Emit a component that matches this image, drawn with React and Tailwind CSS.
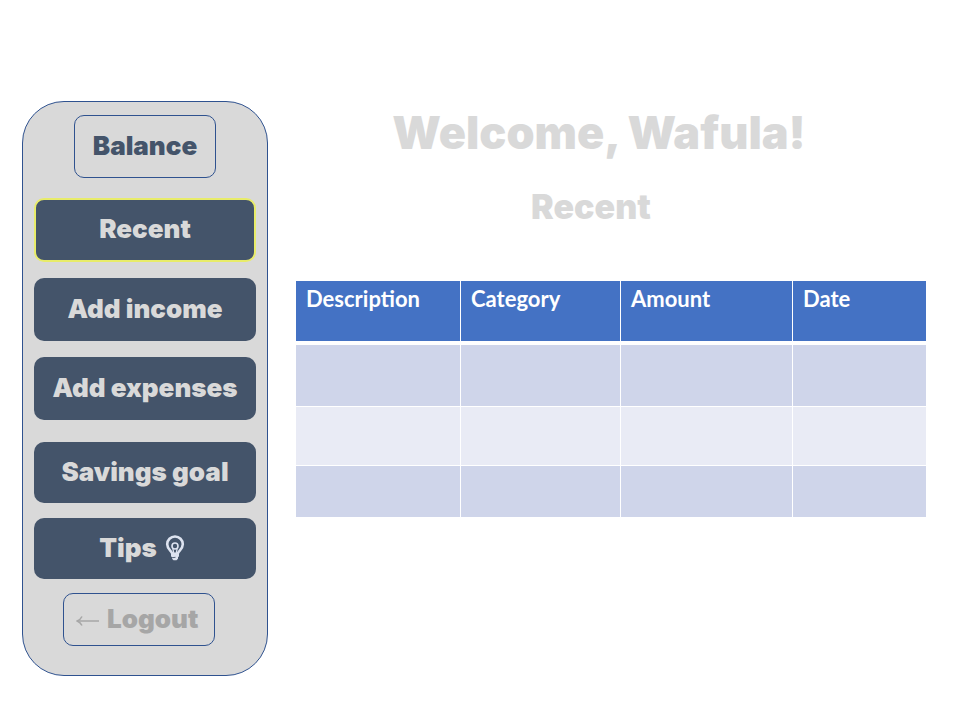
import clsx from "clsx";

const columns = [
  { label: "Description", width: "w-[165px]" },
  { label: "Category", width: "w-[160px]" },
  { label: "Amount", width: "w-[172px]" },
  { label: "Date", width: "w-[133px]" },
];

const rows = [
  { id: 1, style: "h-[62px] bg-[#cfd5ea]" },
  { id: 2, style: "h-[59px] bg-[#e9ebf5]" },
  { id: 3, style: "h-[52px] bg-[#cfd5ea]" },
];

function BulbIcon() {
  return (
    <svg viewBox="0 0 20 26" className="h-[26px] w-5 shrink-0 text-[#dde3f0]" fill="none" aria-hidden="true">
      <path
        d="M7 18.500C7 16 2.200 14.400 2.200 9.300a7.800 7.800 0 0 1 15.600 0c0 5.100-4.800 6.700-4.800 9.200"
        stroke="currentColor"
        strokeWidth="2.600"
      />
      <path
        d="M8.800 18 7.800 13.500M11.200 18l1-4.500"
        stroke="currentColor"
        strokeWidth="1.200"
      />
      <circle cx="10" cy="11" r="3" stroke="currentColor" strokeWidth="1.600" />
      <path d="M6 17.500h8v3.700l-1 1v1.600L11.500 25.300h-3L7 23.800v-1.600l-1-1z" fill="currentColor" />
      <path d="M6.500 22.800l4-.5" stroke="#44546a" strokeWidth="0.900" />
    </svg>
  );
}

function ArrowIcon() {
  return (
    <svg viewBox="0 0 23 12" className="mt-1 h-3 w-[23px] shrink-0" fill="none" aria-hidden="true">
      <path d="M1.500 6H23" stroke="currentColor" strokeWidth="1.500" />
      <path d="M6 1.500C5 3.500 3.500 5 1.200 6 3.500 7 5 8.500 6 10.500" stroke="currentColor" strokeWidth="1.500" />
    </svg>
  );
}

function MenuButton({ active, className, children }) {
  return (
    <button
      type="button"
      className={clsx(
        "flex w-full items-center justify-center gap-2 rounded-[10px] bg-[#44546a] pb-0.5 text-[#d9d9d9]",
        active && "border-2 border-[#e8ec6a]",
        className
      )}
    >
      {children}
    </button>
  );
}

function OutlineButton({ className, children }) {
  return (
    <button
      type="button"
      className={clsx(
        "flex items-center rounded-[10px] border border-[#2f528f] pb-0.5",
        className
      )}
    >
      {children}
    </button>
  );
}

export default function App() {
  return (
    <div className="flex min-h-screen items-start gap-7 bg-white pt-[101px] pr-[34px] pb-11 pl-[22px] font-['Arial_Black',Inter,sans-serif]">
      <nav
        aria-label="Main"
        className="flex w-[246px] shrink-0 flex-col items-center rounded-[42px] border border-[#2f528f] bg-[#d9d9d9] px-[11px] pt-[13px] pb-[29px] text-[26px] leading-8 font-black"
      >
        <OutlineButton className="h-[63px] w-[142px] justify-center text-[#44546a]">
          Balance
        </OutlineButton>
        <MenuButton active className="mt-5 h-16">Recent</MenuButton>
        <MenuButton className="mt-4 h-[63px]">Add income</MenuButton>
        <MenuButton className="mt-4 h-[63px]">Add expenses</MenuButton>
        <MenuButton className="mt-[22px] h-[61px]">Savings goal</MenuButton>
        <MenuButton className="mt-[15px] h-[61px] pr-1.5">
          Tips
          <BulbIcon />
        </MenuButton>
        <OutlineButton className="mt-3.5 mr-3 h-[53px] w-[152px] gap-2 pl-3 text-[#a6a6a6]">
          <ArrowIcon />
          Logout
        </OutlineButton>
      </nav>

      <main className="min-w-0 flex-1">
        <h1 className="mt-1 pr-6 text-center text-[45px] leading-[56px] font-black text-[#d9d9d9]">
          Welcome, Wafula!
        </h1>
        <h2 className="mt-[26px] pr-10 text-center text-[34px] leading-10 font-black text-[#d9d9d9]">
          Recent
        </h2>
        <table className="mt-[54px] w-full table-fixed border-separate border-spacing-0 font-['Lato',sans-serif]">
          <thead>
            <tr className="h-16 bg-[#4472c4]">
              {columns.map((column) => (
                <th
                  key={column.label}
                  scope="col"
                  className={clsx(
                    "border-r border-b-4 border-white px-2.5 pt-1 text-left align-top text-[22px] leading-7 font-bold text-white last:border-r-0",
                    column.width
                  )}
                >
                  {column.label}
                </th>
              ))}
            </tr>
          </thead>
          <tbody>
            {rows.map((row) => (
              <tr key={row.id} className={row.style}>
                {columns.map((column) => (
                  <td
                    key={column.label}
                    className="border-r border-b border-white last:border-r-0"
                  />
                ))}
              </tr>
            ))}
          </tbody>
        </table>
      </main>
    </div>
  );
}
